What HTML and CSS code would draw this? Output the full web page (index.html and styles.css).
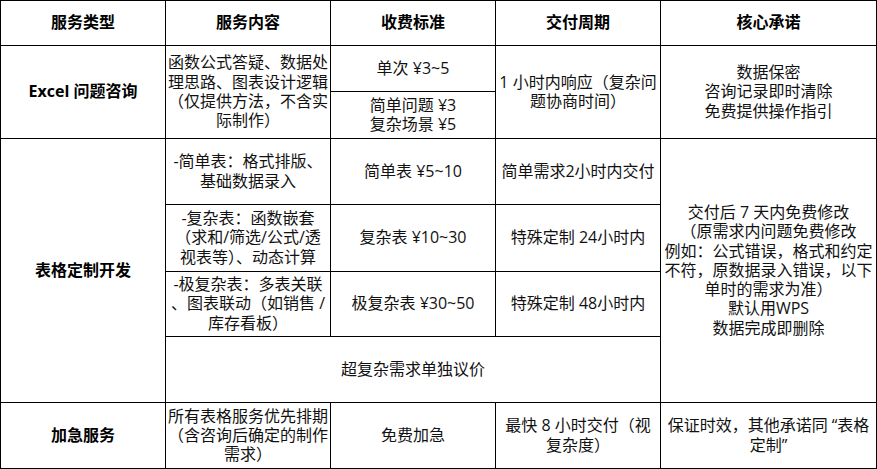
FILE: index.html
```html
<!DOCTYPE html>
<html lang="zh-CN">
<head>
<meta charset="utf-8">
<title>服务价目表</title>
<link rel="stylesheet" href="styles.css">
</head>
<body>
<table class="svc">
  <colgroup>
    <col class="c-type">
    <col class="c-content">
    <col class="c-price">
    <col class="c-time">
    <col class="c-promise">
  </colgroup>
  <thead>
    <tr class="r-head">
      <th>服务类型</th>
      <th>服务内容</th>
      <th>收费标准</th>
      <th>交付周期</th>
      <th>核心承诺</th>
    </tr>
  </thead>
  <tbody>
    <tr class="r1a">
      <th rowspan="2">Excel 问题咨询</th>
      <td rowspan="2">函数公式答疑、数据处<br>理思路、图表设计逻辑<br>（仅提供方法，不含实<br>际制作）</td>
      <td>单次 ¥3~5</td>
      <td rowspan="2">1 小时内响应（复杂问<br>题协商时间）</td>
      <td rowspan="2">数据保密<br>咨询记录即时清除<br>免费提供操作指引</td>
    </tr>
    <tr class="r1b">
      <td>简单问题 ¥3<br>复杂场景 ¥5</td>
    </tr>
    <tr class="r2a">
      <th rowspan="4">表格定制开发</th>
      <td>-简单表：格式排版、<br>基础数据录入</td>
      <td>简单表 ¥5~10</td>
      <td>简单需求2小时内交付</td>
      <td rowspan="4">交付后 7 天内免费修改<br>（原需求内问题免费修改<br>例如：公式错误，格式和约定<br>不符，原数据录入错误，以下<br>单时的需求为准）<br>默认用WPS<br>数据完成即删除</td>
    </tr>
    <tr class="r2b">
      <td>-复杂表：函数嵌套<br>（求和/筛选/公式/透<br>视表等）、动态计算</td>
      <td>复杂表 ¥10~30</td>
      <td>特殊定制 24小时内</td>
    </tr>
    <tr class="r2c">
      <td>-极复杂表：多表关联<br>、图表联动（如销售 /<br>库存看板）</td>
      <td>极复杂表 ¥30~50</td>
      <td>特殊定制 48小时内</td>
    </tr>
    <tr class="r2d">
      <td colspan="3">超复杂需求单独议价</td>
    </tr>
    <tr class="r3">
      <th>加急服务</th>
      <td>所有表格服务优先排期<br>（含咨询后确定的制作<br>需求）</td>
      <td>免费加急</td>
      <td>最快 8 小时交付（视<br>复杂度）</td>
      <td>保证时效，其他承诺同 “表格<br>定制”</td>
    </tr>
  </tbody>
</table>
</body>
</html>
```
FILE: styles.css
```css
html, body {
  margin: 0;
  padding: 0;
  background: #ffffff;
}

body {
  font-family: "Open Sans", "Noto Sans CJK SC", sans-serif;
  font-size: 16px;
  color: #111111;
}

.svc {
  border-collapse: collapse;
  table-layout: fixed;
  width: 876px;
}

.c-type,
.c-content,
.c-price,
.c-time {
  width: 165px;
}

.c-promise {
  width: 216px;
}

.svc th,
.svc td {
  border: 1px solid #000000;
  padding: 0;
  text-align: center;
  vertical-align: middle;
  line-height: 19.3px;
  white-space: nowrap;
  overflow: hidden;
}

.svc th {
  font-weight: 700;
  color: #000000;
}

.svc td {
  font-weight: 400;
}

.r-head { height: 45px; }
.r1a { height: 46px; }
.r1b { height: 47px; }
.r2a { height: 66px; }
.r2b { height: 67px; }
.r2c { height: 65px; }
.r2d { height: 66px; }
.r3 { height: 66px; }
```
